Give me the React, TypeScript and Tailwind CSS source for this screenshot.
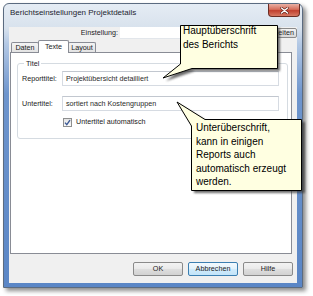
import React from 'react';

// Win7-style dialog "Berichtseinstellungen Projektdetails" with two help callouts

const tabBase =
  'flex justify-center border border-b-0 border-[#898c95] text-[7.2px] leading-[9px] rounded-t-[2px]';

const Tab = ({ label, active, w }: { label: string; active?: boolean; w: string }) =>
  active ? (
    <div className={`${tabBase} ${w} relative z-10 -mx-[1px] -mb-[1px] h-[13px] items-start bg-white pt-[1px]`}>
      {label}
    </div>
  ) : (
    <div className={`${tabBase} ${w} h-[10px] items-center bg-[linear-gradient(to_bottom,#f4f4f4,#e3e3e3)]`}>
      {label}
    </div>
  );

const WinButton = ({ label, focused }: { label: string; focused?: boolean }) => (
  <button
    className={`flex h-[14px] w-[50px] items-center justify-center rounded-[2px] border text-[7.2px] leading-none text-[#1b1b1b] ${
      focused
        ? 'border-[#3c7fb1] bg-[linear-gradient(to_bottom,#f2f9fe_0%,#e4f3fc_45%,#cfeafb_55%,#c2e4f9_100%)]'
        : 'border-[#8a8a8a] bg-[linear-gradient(to_bottom,#f3f3f3_0%,#ebebeb_45%,#dddddd_55%,#d2d2d2_100%)]'
    }`}
  >
    {label}
  </button>
);

const TextField = ({ value }: { value: string }) => (
  <div className="flex h-[15px] w-[217px] items-center border border-[#d6dbe2] border-t-[#c2c7cf] bg-white pl-[3px] text-[7.2px] leading-none text-[#2a2a2a]">
    {value}
  </div>
);

export default function App() {
  return (
    <div className="relative h-[296px] w-[313px] overflow-hidden bg-white font-['Liberation_Sans',Arial,sans-serif] text-[#1b1b1b]">
      {/* window frame */}
      <div className="ml-[3px] mt-[3px] flex h-[285px] w-[300px] flex-col rounded-t-[6px] border border-[#5b6b80] bg-[linear-gradient(to_bottom,#e5ecf4_0px,#d8e2ed_24px,#b3c8e4_40px,#6e95cd_90px,#5a86c6_100%)] shadow-[3px_3px_4px_rgba(0,0,0,0.45)]">
        {/* title bar */}
        <div className="flex h-[23px] shrink-0 items-start justify-between">
          <span className="ml-[6px] mt-[4px] text-[8px] leading-[10px] text-[#1e2530]">
            Berichtseinstellungen Projektdetails
          </span>
          <div className="mr-[2px] flex h-[13px] w-[32px] items-center justify-center rounded-b-[4px] border border-t-0 border-[#6b2d24] bg-[linear-gradient(to_bottom,#e9b0a4_0%,#d66e5b_45%,#c1402f_55%,#d87a64_100%)]">
            <svg width="9" height="7" viewBox="0 0 9 7">
              <path d="M1.5 1 L7.5 6 M7.5 1 L1.5 6" stroke="#5a1a12" strokeWidth="2.6" strokeLinecap="round" />
              <path d="M1.5 1 L7.5 6 M7.5 1 L1.5 6" stroke="#ffffff" strokeWidth="1.5" strokeLinecap="round" />
            </svg>
          </div>
        </div>

        {/* client area */}
        <div className="mx-[5px] flex h-[256px] flex-col bg-[#f0f0f0]">
          {/* Einstellung row */}
          <div className="flex h-[12px] shrink-0 items-stretch">
            <div className="w-[111px] pr-[2px] text-right text-[7.2px] leading-[12px]">Einstellung:</div>
            <div className="w-[134px] border-b border-[#e2e6eb] bg-white" />
            <button className="ml-[2px] mt-[1px] flex h-[10px] w-[41px] items-center justify-center rounded-[2px] border border-[#8a8a8a] bg-[linear-gradient(to_bottom,#f3f3f3,#d8d8d8)] text-[7.2px] leading-none">
              Bearbeiten
            </button>
          </div>

          {/* tabs */}
          <div className="relative z-10 mt-[1px] flex h-[12px] shrink-0 items-end pl-[2px]">
            <Tab label="Daten" w="w-[28px]" />
            <Tab label="Texte" w="w-[31px]" active />
            <Tab label="Layout" w="w-[28px]" />
          </div>

          {/* tab panel */}
          <div className="ml-[1px] h-[202px] w-[282px] shrink-0 border border-[#898c95] bg-white">
            <fieldset className="ml-[6px] mt-[6px] w-[271px] rounded-[3px] border border-[#d5dbe1] pb-[11px] pl-[4px] pt-[3px]">
              <legend className="ml-[2px] px-[2px] text-[7.2px] leading-[9px]">Titel</legend>
              <div className="flex h-[15px] items-center">
                <span className="w-[40px] text-[7.2px] leading-none">Reporttitel:</span>
                <TextField value="Projektübersicht detailliert" />
              </div>
              <div className="mt-[10px] flex h-[15px] items-center">
                <span className="w-[40px] text-[7.2px] leading-none">Untertitel:</span>
                <TextField value="sortiert nach Kostengruppen" />
              </div>
              <div className="mt-[6px] flex h-[10px] items-center pl-[41px]">
                <div className="flex h-[9px] w-[9px] items-center justify-center border border-[#8e8f8f] bg-[linear-gradient(to_bottom,#e4e4e4,#fbfbfb)]">
                  <svg width="7" height="7" viewBox="0 0 7 7">
                    <path d="M1 3.6 L2.8 5.6 L6 1.2" fill="none" stroke="#3c5a96" strokeWidth="1.4" />
                  </svg>
                </div>
                <span className="ml-[4px] text-[7.2px] leading-none">Untertitel automatisch</span>
              </div>
            </fieldset>
          </div>

          {/* dialog buttons */}
          <div className="mt-[8px] flex h-[14px] shrink-0 justify-end gap-[5px] pr-[4px]">
            <WinButton label="OK" />
            <WinButton label="Abbrechen" focused />
            <WinButton label="Hilfe" />
          </div>
        </div>
      </div>

      {/* callouts */}
      <svg className="pointer-events-none absolute left-0 top-0" width="313" height="296" viewBox="0 0 313 296">
        <defs>
          <filter id="soft" x="-10%" y="-10%" width="130%" height="130%">
            <feGaussianBlur stdDeviation="1" />
          </filter>
        </defs>
        <g filter="url(#soft)" fill="#3a3a3a" opacity="0.75">
          <polygon points="183,28 280,28 280,71 195,71 166,81 183,67" />
          <polygon points="208,122 305,122 305,193 194,193 194,128 180,105" />
        </g>
        <polygon points="180.5,25.5 277.5,25.5 277.5,68.5 192,68.5 163,78 180.5,64" fill="#ffffe1" stroke="#000" strokeWidth="1" />
        <polygon points="205,119.5 301.5,119.5 301.5,190.5 191.5,190.5 191.5,126 177,102" fill="#ffffe1" stroke="#000" strokeWidth="1" />
      </svg>
      <div className="absolute left-[183px] top-[24px] text-[10px] leading-[13.5px] text-black">
        Hauptüberschrift
        <br />
        des Berichts
      </div>
      <div className="absolute left-[196px] top-[121px] text-[10px] leading-[13.5px] text-black">
        Unterüberschrift,
        <br />
        kann in einigen
        <br />
        Reports auch
        <br />
        automatisch erzeugt
        <br />
        werden.
      </div>
    </div>
  );
}
